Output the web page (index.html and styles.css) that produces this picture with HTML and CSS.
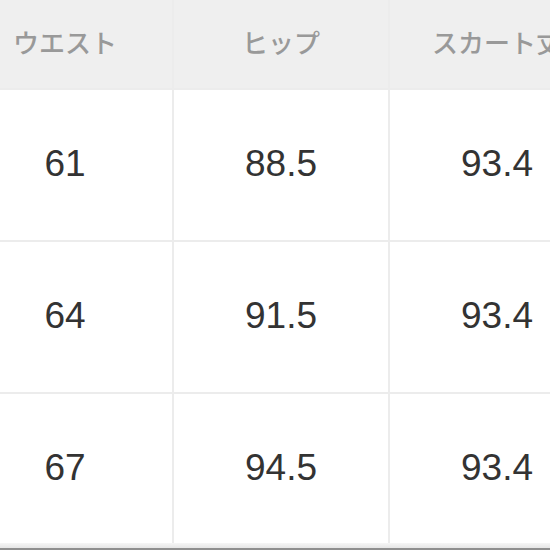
FILE: index.html
```html
<!DOCTYPE html>
<html lang="ja">
<head>
<meta charset="utf-8">
<link rel="stylesheet" href="styles.css">
</head>
<body>
<div class="frame">
  <div class="table">
    <div class="cell head">ウエスト</div>
    <div class="cell head">ヒップ</div>
    <div class="cell head">スカート丈</div>
    <div class="cell">61</div>
    <div class="cell">88.5</div>
    <div class="cell">93.4</div>
    <div class="cell">64</div>
    <div class="cell">91.5</div>
    <div class="cell">93.4</div>
    <div class="cell">67</div>
    <div class="cell">94.5</div>
    <div class="cell">93.4</div>
  </div>
  <div class="footer"></div>
</div>
</body>
</html>
```
FILE: styles.css
```css
html, body {
  margin: 0;
  padding: 0;
  background: #ffffff;
  overflow: hidden;
}
.frame {
  width: 550px;
  height: 550px;
  overflow: hidden;
  display: flex;
  flex-direction: column;
}
.table {
  display: grid;
  grid-template-columns: 214px 214px 214px;
  grid-template-rows: 88px 150px 150px 149px;
  gap: 2px;
  background: #ececec;
  margin-left: -42px;
  width: 646px;
  flex: none;
}
.cell {
  background: #ffffff;
  display: flex;
  align-items: center;
  justify-content: center;
  font-family: "Liberation Sans", Arial, sans-serif;
  font-size: 37px;
  color: #333333;
  padding-bottom: 2px;
}
.head {
  background: #efefef;
  font-family: "Noto Sans CJK JP", sans-serif;
  font-size: 26px;
  font-weight: 500;
  color: #999999;
  padding-bottom: 6px;
  white-space: nowrap;
}
.footer {
  flex: none;
  height: 5px;
  background: linear-gradient(#f6f6f6, #e6e6e6);
  border-bottom: 2px solid #8f8f8f;
}
```
